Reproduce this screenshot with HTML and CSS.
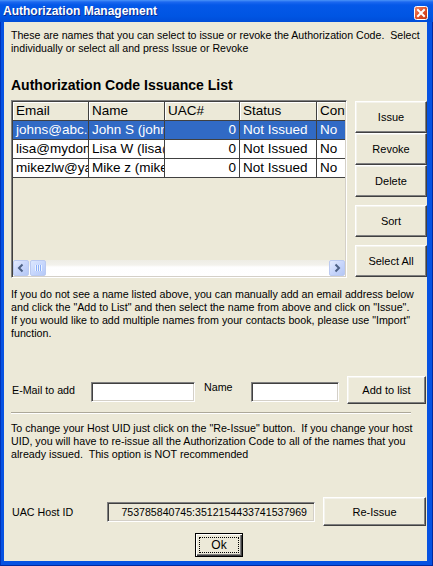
FILE: index.html
```html
<!DOCTYPE html>
<html>
<head>
<meta charset="utf-8">
<title>Authorization Management</title>
<link rel="stylesheet" href="styles.css">
</head>
<body>
<div class="window">
  <div class="titlebar">
    <span class="title">Authorization Management</span>
    <span class="close">
      <svg width="14" height="14" viewBox="0 0 14 14">
        <defs>
          <linearGradient id="cg" x1="0" y1="0" x2="1" y2="1">
            <stop offset="0" stop-color="#F08A66"/>
            <stop offset="0.5" stop-color="#E0512B"/>
            <stop offset="1" stop-color="#C2350F"/>
          </linearGradient>
        </defs>
        <rect x="0.5" y="0.5" width="13" height="13" rx="2" fill="url(#cg)" stroke="#FFFFFF"/>
        <path d="M4 4 L10 10 M10 4 L4 10" stroke="#FFFFFF" stroke-width="2" stroke-linecap="square"/>
      </svg>
    </span>
  </div>
  <div class="frame">
    <div class="client">
      <p class="intro">These are names that you can select to issue or revoke the Authorization Code.&nbsp; Select<br>individually or select all and press Issue or Revoke</p>
      <h1 class="heading">Authorization Code Issuance List</h1>

      <div class="list-row">
        <div class="listview">
          <div class="list-clip">
            <div class="lv-row lv-head">
              <div class="cell">Email</div>
              <div class="cell">Name</div>
              <div class="cell">UAC#</div>
              <div class="cell">Status</div>
              <div class="cell">Confirmed</div>
            </div>
            <div class="lv-row lv-item selected">
              <div class="cell">johns@abc.com</div>
              <div class="cell">John S (johns@abc.com)</div>
              <div class="cell num">0</div>
              <div class="cell">Not Issued</div>
              <div class="cell">No</div>
            </div>
            <div class="lv-row lv-item">
              <div class="cell">lisa@mydomain.com</div>
              <div class="cell">Lisa W (lisa@mydomain.com)</div>
              <div class="cell num">0</div>
              <div class="cell">Not Issued</div>
              <div class="cell">No</div>
            </div>
            <div class="lv-row lv-item">
              <div class="cell">mikezlw@yahoo.com</div>
              <div class="cell">Mike z (mikezlw@yahoo.com)</div>
              <div class="cell num">0</div>
              <div class="cell">Not Issued</div>
              <div class="cell">No</div>
            </div>
          </div>
          <div class="hscroll">
            <span class="sb-btn">
              <svg width="16" height="16" viewBox="0 0 16 16"><path d="M9.5 4.5 L6 8 L9.5 11.5" fill="none" stroke="#4D6185" stroke-width="2"/></svg>
            </span>
            <span class="sb-thumb">
              <svg width="16" height="16" viewBox="0 0 16 16"><path d="M5.5 5 V11 M7.5 5 V11 M9.5 5 V11 M11.5 5 V11" stroke="#EEF4FE" stroke-width="1"/><path d="M6.5 5 V11 M8.5 5 V11 M10.5 5 V11" stroke="#8CB0F8" stroke-width="1"/></svg>
            </span>
            <span class="sb-track"></span>
            <span class="sb-btn">
              <svg width="16" height="16" viewBox="0 0 16 16"><path d="M6.5 4.5 L10 8 L6.5 11.5" fill="none" stroke="#4D6185" stroke-width="2"/></svg>
            </span>
          </div>
        </div>
        <div class="side-buttons">
          <div class="btn-stack">
            <button class="btn side">Issue</button>
            <button class="btn side">Revoke</button>
            <button class="btn side">Delete</button>
          </div>
          <button class="btn side">Sort</button>
          <button class="btn side">Select All</button>
        </div>
      </div>

      <p class="para para-add">If you do not see a name listed above, you can manually add an email address below<br>and click the "Add to List" and then select the name from above and click on "Issue".<br>If you would like to add multiple names from your contacts book, please use "Import"<br>function.</p>

      <div class="form-row add-row">
        <span class="label label-email">E-Mail to add</span>
        <span class="field field-email"></span>
        <span class="label label-name">Name</span>
        <span class="field field-name"></span>
        <button class="btn btn-add">Add to list</button>
      </div>

      <div class="separator"></div>

      <p class="para para-host">To change your Host UID just click on the "Re-Issue" button.&nbsp; If you change your host<br>UID, you will have to re-issue all the Authorization Code to all of the names that you<br>already issued.&nbsp; This option is NOT recommended</p>

      <div class="form-row host-row">
        <span class="label label-host">UAC Host ID</span>
        <span class="field field-host">753785840745:3512154433741537969</span>
        <button class="btn btn-reissue">Re-Issue</button>
      </div>

      <div class="ok-row">
        <button class="btn btn-ok"><span class="focus">Ok</span></button>
      </div>
    </div>
  </div>
</div>
</body>
</html>
```

FILE: styles.css
```css
* { box-sizing: border-box; }

html, body {
  margin: 0;
  padding: 0;
}

body {
  width: 433px;
  height: 566px;
  overflow: hidden;
  font-family: "Liberation Sans", Arial, sans-serif;
  color: #000;
  background: #ffffff;
}

.window {
  width: 433px;
  height: 566px;
  display: flex;
  flex-direction: column;
}

.titlebar {
  height: 22px;
  flex: none;
  display: flex;
  align-items: center;
  justify-content: space-between;
  padding: 0 5px 0 3px;
  background: linear-gradient(to bottom, #4A94F8 0, #1C68F0 2px, #0458E8 5px, #0055E3 16px, #004DD8 22px);
}

.title {
  color: #ffffff;
  font-weight: bold;
  font-size: 12px;
  line-height: 22px;
  text-shadow: 1px 1px 0 #0B2C8E;
  white-space: nowrap;
}

.close {
  display: flex;
  width: 14px;
  height: 14px;
  margin-top: 3px;
}

.frame {
  flex: 1;
  padding: 0 5px 4px 3px;
  background: #0652E2;
  border-left: 1px solid #0033B8;
  border-right: 1px solid #0029A0;
  border-bottom: 1px solid #0029A0;
}

.client {
  height: 100%;
  background: #ECE9D8;
  padding: 7px 1px 0 7px;
  display: flex;
  flex-direction: column;
}

.intro {
  margin: 0;
  font-size: 10.6px;
  line-height: 13px;
  white-space: nowrap;
}

.heading {
  margin: 22px 0 0 0;
  font-size: 14px;
  font-weight: bold;
  line-height: 16px;
  white-space: nowrap;
}

.list-row {
  margin-top: 7px;
  display: flex;
  gap: 8px;
  align-items: flex-start;
}

.listview {
  width: 336px;
  height: 178px;
  flex: none;
  border-style: solid;
  border-width: 1px;
  border-color: #808080 #FFFFFF #FFFFFF #808080;
  box-shadow: inset 1px 1px 0 #404040, inset -1px -1px 0 #D4D0C8;
  padding: 1px;
  display: flex;
  flex-direction: column;
}

.list-clip {
  flex: 1;
  overflow: hidden;
  background: #ECE9D8;
}

.lv-row {
  display: grid;
  grid-template-columns: 76px 76px 75px 77px 76px;
  width: 380px;
}

.cell {
  overflow: hidden;
  white-space: nowrap;
  font-size: 13.5px;
  padding: 0 2px 0 3px;
}

.lv-head .cell {
  height: 19px;
  line-height: 18px;
  background: #ECE9D8;
  border-right: 1px solid #404040;
  border-bottom: 1px solid #404040;
  box-shadow: inset 1px 1px 0 #FFFFFF;
}

.lv-item .cell {
  height: 19px;
  line-height: 18px;
  background: #FFFFFF;
  border-right: 1px solid #404040;
  border-bottom: 1px solid #404040;
}

.lv-item.selected .cell {
  background: #316AC5;
  color: #FFFFFF;
}

.cell.num {
  text-align: right;
  padding-right: 3px;
}

.hscroll {
  height: 16px;
  flex: none;
  display: flex;
  background: linear-gradient(to bottom, #EEEDE5 0, #F3F2EC 5px, #FEFEFE 7px, #FFFFFF 16px);
}

.sb-btn, .sb-thumb {
  width: 16px;
  height: 16px;
  flex: none;
  display: flex;
  border: 1px solid #BBCAF0;
  border-radius: 2px;
  background: linear-gradient(135deg, #E4EBFE 0%, #C8D6FB 50%, #B4C7F4 100%);
}

.sb-btn svg, .sb-thumb svg {
  margin: -1px;
}

.sb-thumb {
  margin-left: 1px;
  background: linear-gradient(135deg, #DDE8FE 0%, #C3D4FC 60%, #B5C9F7 100%);
}

.sb-track {
  flex: 1;
}

.side-buttons {
  display: flex;
  flex-direction: column;
  gap: 8px;
  margin-top: 1px;
}

.btn-stack {
  display: flex;
  flex-direction: column;
}

.btn {
  font-family: "Liberation Sans", Arial, sans-serif;
  font-size: 11px;
  color: #000;
  background: #ECE9D8;
  border-style: solid;
  border-width: 1px;
  border-color: #FFFFFF #404040 #404040 #FFFFFF;
  box-shadow: inset -1px -1px 0 #808080, inset 1px 1px 0 #F4F3EC;
  padding: 0;
  margin: 0;
  border-radius: 0;
}

.btn.side {
  width: 72px;
  height: 32px;
}

.para {
  margin: 0;
  font-size: 10.7px;
  line-height: 13px;
  white-space: nowrap;
}

.para-add {
  margin-top: 10px;
}

.form-row {
  display: flex;
  align-items: center;
}

.add-row {
  margin-top: 36px;
  height: 28px;
}

.label {
  font-size: 10.7px;
  white-space: nowrap;
  flex: none;
}

.label-email { width: 80px; padding-left: 1px; }
.label-name { width: 56px; padding-left: 9px; margin-top: -6px; }

.field {
  flex: none;
  height: 20px;
  background: #FFFFFF;
  border-style: solid;
  border-width: 1px;
  border-color: #808080 #FFFFFF #FFFFFF #808080;
  box-shadow: inset 1px 1px 0 #404040, inset -1px -1px 0 #D4D0C8;
}

.field-email { width: 104px; margin-top: 4px; }
.field-name { width: 88px; margin-top: 4px; }

.btn-add {
  width: 80px;
  height: 28px;
  margin-left: 8px;
}

.separator {
  margin-top: 8px;
  width: 400px;
  height: 2px;
  border-top: 1px solid #ACA899;
  border-bottom: 1px solid #FFFFFF;
}

.para-host {
  margin-top: 8px;
}

.host-row {
  margin-top: 36px;
  height: 29px;
}

.label-host { width: 96px; padding-left: 1px; }

.field-host {
  width: 208px;
  background: #ECE9D8;
  font-size: 10.6px;
  line-height: 18px;
  text-align: right;
  padding-right: 7px;
  white-space: nowrap;
  overflow: hidden;
}

.btn-reissue {
  width: 104px;
  height: 29px;
  margin-left: 8px;
}

.ok-row {
  margin-top: 7px;
  padding-left: 184px;
  display: flex;
}

.btn-ok {
  width: 48px;
  height: 24px;
  border: 1px solid #000000;
  box-shadow: inset 1px 1px 0 #FFFFFF, inset -1px -1px 0 #404040, inset -2px -2px 0 #808080;
  padding: 3px;
  display: flex;
}

.btn-ok .focus {
  flex: 1;
  border: 1px dotted #000000;
  display: flex;
  align-items: center;
  justify-content: center;
  font-size: 12px;
  line-height: 14px;
}
```
